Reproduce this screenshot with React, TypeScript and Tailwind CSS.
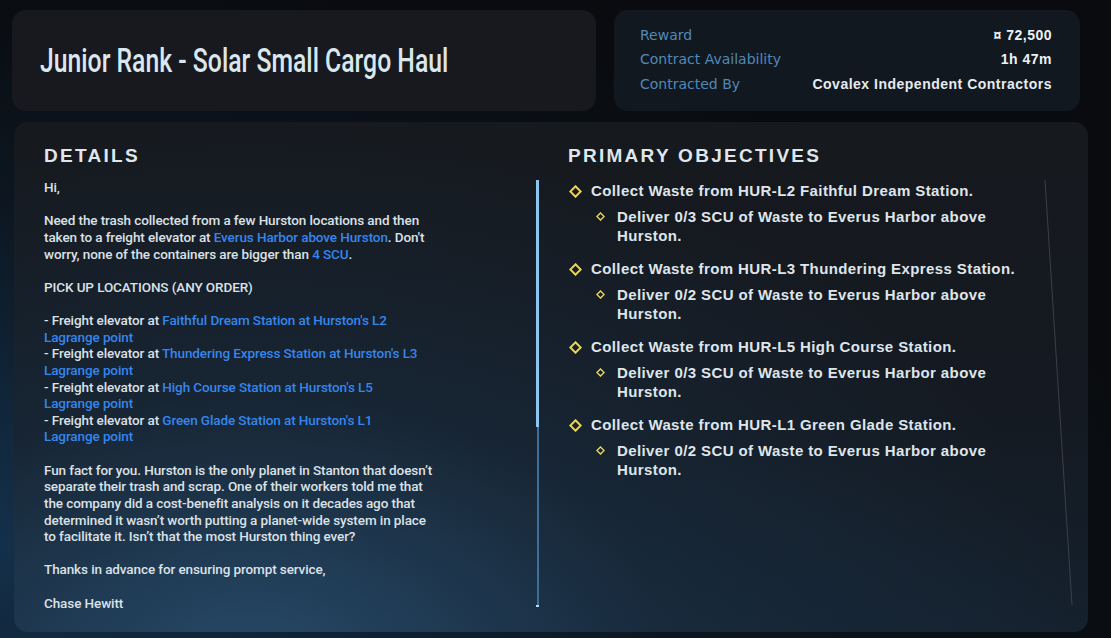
const body = "font-['Roboto','Liberation_Sans',sans-serif]";

type Seg = { t: string; link?: boolean };

const details: Seg[][] = [
  [{ t: "Hi," }],
  [],
  [{ t: "Need the trash collected from a few Hurston locations and then" }],
  [
    { t: "taken to a freight elevator at " },
    { t: "Everus Harbor above Hurston", link: true },
    { t: ". Don't" },
  ],
  [{ t: "worry, none of the containers are bigger than " }, { t: "4 SCU", link: true }, { t: "." }],
  [],
  [{ t: "PICK UP LOCATIONS (ANY ORDER)" }],
  [],
  [{ t: "- Freight elevator at " }, { t: "Faithful Dream Station at Hurston's L2", link: true }],
  [{ t: "Lagrange point", link: true }],
  [{ t: "- Freight elevator at " }, { t: "Thundering Express Station at Hurston's L3", link: true }],
  [{ t: "Lagrange point", link: true }],
  [{ t: "- Freight elevator at " }, { t: "High Course Station at Hurston's L5", link: true }],
  [{ t: "Lagrange point", link: true }],
  [{ t: "- Freight elevator at " }, { t: "Green Glade Station at Hurston's L1", link: true }],
  [{ t: "Lagrange point", link: true }],
  [],
  [{ t: "Fun fact for you. Hurston is the only planet in Stanton that doesn’t" }],
  [{ t: "separate their trash and scrap. One of their workers told me that" }],
  [{ t: "the company did a cost-benefit analysis on it decades ago that" }],
  [{ t: "determined it wasn’t worth putting a planet-wide system in place" }],
  [{ t: "to facilitate it. Isn’t that the most Hurston thing ever?" }],
  [],
  [{ t: "Thanks in advance for ensuring prompt service," }],
  [],
  [{ t: "Chase Hewitt" }],
];

const objectives = [
  { from: "HUR-L2 Faithful Dream Station", scu: "0/3" },
  { from: "HUR-L3 Thundering Express Station", scu: "0/2" },
  { from: "HUR-L5 High Course Station", scu: "0/3" },
  { from: "HUR-L1 Green Glade Station", scu: "0/2" },
];

function Diamond({ size }: { size: number }) {
  return (
    <svg width={size} height={size} viewBox="0 0 12 12" className="shrink-0">
      <path d="M6 1.2 L10.8 6 L6 10.8 L1.2 6 Z" fill="none" stroke="#e9d661" strokeWidth="1.8" />
    </svg>
  );
}

export default function App() {
  return (
    <div className="relative h-[638px] w-[1111px] overflow-hidden bg-[radial-gradient(ellipse_at_0%_85%,#14304a_0%,#0c1620_45%,#090b0e_75%)]">
      <div className="flex gap-[18px] pl-[12px] pt-[10px]">
        <div className="flex h-[101px] w-[584px] items-center rounded-[14px] bg-[#17191e] pl-[28px]">
          <h1 className="inline-block origin-left scale-x-[0.75] whitespace-nowrap font-['Roboto','Liberation_Sans',sans-serif] text-[33px] font-medium leading-none text-[#dbe7ef]">
            Junior Rank - Solar Small Cargo Haul
          </h1>
        </div>
        <div className="flex h-[101px] w-[466px] flex-col justify-center rounded-[14px] bg-[#111820] pl-[26px] pr-[28px]">
          <div className="flex h-[24px] items-center justify-between">
            <span className="font-['DejaVu_Sans',sans-serif] text-[14px] text-[#5288b9]">Reward</span>
            <span className="font-['Liberation_Sans',sans-serif] text-[14px] font-bold tracking-[0.5px] text-[#eef2f5]">¤ 72,500</span>
          </div>
          <div className="flex h-[24px] items-center justify-between">
            <span className="font-['DejaVu_Sans',sans-serif] text-[14px] text-[#5288b9]">Contract Availability</span>
            <span className="font-['Liberation_Sans',sans-serif] text-[14px] font-bold tracking-[0.5px] text-[#eef2f5]">1h 47m</span>
          </div>
          <div className="flex h-[26px] items-center justify-between">
            <span className="font-['DejaVu_Sans',sans-serif] text-[14px] text-[#5288b9]">Contracted By</span>
            <span className="font-['Liberation_Sans',sans-serif] text-[14px] font-bold tracking-[0.5px] text-[#e6ebef]">
              Covalex Independent Contractors
            </span>
          </div>
        </div>
      </div>

      <div className="relative ml-[14px] mt-[11px] flex h-[510px] w-[1074px] rounded-[14px] bg-[radial-gradient(ellipse_at_22%_105%,rgba(52,105,150,0.55)_0%,rgba(30,62,92,0.3)_35%,rgba(20,26,34,0)_70%),linear-gradient(180deg,#16191e_0%,#141a22_60%,#15212e_100%)]">
        <div className="w-[522px] pl-[30px] pt-[21px]">
          <h2 className="font-['Liberation_Sans',sans-serif] text-[19px] font-bold leading-[26px] tracking-[0.12em] text-[#dfe6ec]">
            DETAILS
          </h2>
          <div className={`${body} mt-[10px] text-[13.5px] font-medium leading-[16.64px] tracking-[-0.1px] text-[#dbe1e7]`}>
            {details.map((line, i) => (
              <div key={i} className="h-[16.64px] whitespace-nowrap">
                {line.map((s, j) => (
                  <span key={j} className={s.link ? "text-[#3586ec]" : undefined}>
                    {s.t}
                  </span>
                ))}
              </div>
            ))}
          </div>
        </div>

        <div className="mt-[58px] flex h-[427px] w-[3px] flex-col items-center">
          <div className="h-[247px] w-[3px] bg-[#8cc5f0]" />
          <div className="w-[2px] flex-1 bg-[#3f6f98]" />
          <div className="h-[2px] w-[3px] bg-[#b9dcf5]" />
        </div>

        <div className="flex-1 pl-[29px] pt-[21px] font-['Liberation_Sans',sans-serif]">
          <h2 className="text-[19px] font-bold leading-[26px] tracking-[0.12em] text-[#dfe6ec]">
            PRIMARY OBJECTIVES
          </h2>
          <div className="mt-[13px] flex flex-col gap-[15px]">
            {objectives.map((o) => (
              <div key={o.from}>
                <div className="flex h-[19px] items-center gap-[9px] pl-[1px]">
                  <Diamond size={13} />
                  <span className="whitespace-nowrap text-[15px] font-bold tracking-[0.4px] text-[#dfe5ea]">
                    Collect Waste from {o.from}.
                  </span>
                </div>
                <div className="mt-[6px] flex gap-[12px] pl-[28px]">
                  <div className="flex h-[19px] items-center">
                    <Diamond size={9} />
                  </div>
                  <span className="text-[15px] font-bold leading-[19px] tracking-[0.4px] text-[#dfe5ea]">
                    Deliver {o.scu} SCU of Waste to Everus Harbor above
                    <br />
                    Hurston.
                  </span>
                </div>
              </div>
            ))}
          </div>
        </div>

        <svg className="absolute left-0 top-0" width="1074" height="510">
          <line x1="1031" y1="58" x2="1058" y2="483" stroke="#3b4048" strokeWidth="1" />
        </svg>
      </div>
    </div>
  );
}
